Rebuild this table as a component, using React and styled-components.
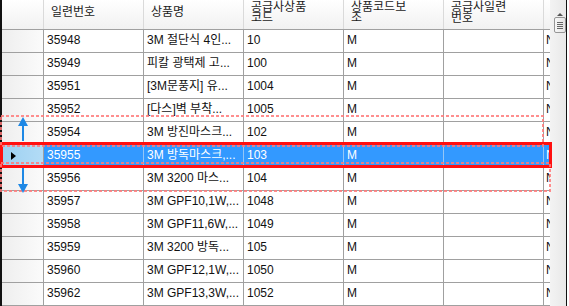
import styled, { createGlobalStyle } from "styled-components";

const GlobalStyle = createGlobalStyle`
  body {
    margin: 0;
    background: #fff;
  }
`;

const Frame = styled.div`
  position: relative;
  width: 569px;
  height: 306px;
  display: flex;
  overflow: hidden;
  font-family: "Liberation Sans", "Noto Sans CJK KR", sans-serif;
  font-size: 12px;
  color: #000;
  background: #fff;
`;

const GridArea = styled.div`
  width: 550px;
  flex: none;
  border-left: 2px solid #111;
  box-sizing: border-box;
  display: flex;
  flex-direction: column;
  overflow: hidden;
`;

const HeaderRow = styled.div`
  display: flex;
  height: 30px;
  flex: none;
  box-sizing: border-box;
  border-bottom: 1px solid #a0a0a0;
  background: linear-gradient(#ffffff, #f1f1f1);
`;

const HeaderCorner = styled.div`
  width: 42px;
  flex: none;
  box-sizing: border-box;
  border-right: 1px solid #dadada;
`;

const HeaderCell = styled.div`
  width: 100px;
  flex: none;
  box-sizing: border-box;
  border-right: 1px solid #dadada;
  padding: 0 0 4px 7px;
  display: flex;
  align-items: center;
  line-height: 11px;
  white-space: pre;
  overflow: hidden;
  color: #1a1a1a;
`;

const HeaderRest = styled.div`
  flex: 1;
`;

const Row = styled.div`
  display: flex;
  height: 23px;
  flex: none;
  box-sizing: border-box;
  border-bottom: 1px solid #a0a0a0;
`;

const RowHeader = styled.div`
  width: 42px;
  flex: none;
  box-sizing: border-box;
  border-right: 1px solid #a0a0a0;
  display: flex;
  align-items: center;
  padding-left: 9px;
  background: ${(p) =>
    p.$selected
      ? "linear-gradient(to right, #9dd0f1, #b3dcf6)"
      : "linear-gradient(to right, #eeeeee, #fbfbfb)"};
`;

const Pointer = styled.span`
  width: 0;
  height: 0;
  border-top: 4px solid transparent;
  border-bottom: 4px solid transparent;
  border-left: 5px solid #000;
`;

const Cell = styled.div`
  width: 100px;
  flex: none;
  box-sizing: border-box;
  border-right: 1px solid ${(p) => (p.$selected ? "#94c6f6" : "#a0a0a0")};
  padding: 0 2px 0 3px;
  line-height: 21px;
  white-space: nowrap;
  overflow: hidden;
  background: ${(p) => (p.$selected ? "#3399ff" : "#fff")};
  color: ${(p) => (p.$selected ? "#fff" : "#111")};
`;

const RestCell = styled(Cell)`
  width: auto;
  flex: 1;
  border-right: none;
  padding: 0 0 0 2px;
`;

const ScrollBar = styled.div`
  width: 16px;
  flex: none;
  background: linear-gradient(to right, #f3f3f3, #e8e8e8);
  display: flex;
  flex-direction: column;
  align-items: center;
  padding-top: 13px;
  padding-left: 3px;
  box-sizing: border-box;
`;

const UpArrow = styled.span`
  width: 0;
  height: 0;
  border-left: 3px solid transparent;
  border-right: 3px solid transparent;
  border-bottom: 3px solid #555;
  margin-bottom: 1px;
`;

const Thumb = styled.div`
  width: 12px;
  height: 16px;
  box-sizing: border-box;
  border: 1px solid #969696;
  border-radius: 2px;
  background: linear-gradient(to right, #f7f7f7, #e4e4e4);
  display: flex;
  flex-direction: column;
  align-items: center;
  justify-content: center;
  gap: 1px;
`;

const Grip = styled.span`
  width: 6px;
  height: 1px;
  background: #666;
`;

const EdgeLine = styled.div`
  width: 1px;
  flex: none;
  background: #111;
  margin-right: 2px;
`;

const Highlight = styled.div`
  position: absolute;
  left: 0;
  top: 142px;
  width: 552px;
  height: 26px;
  box-sizing: border-box;
  border: 3px solid #ff1010;
  pointer-events: none;
`;

const Overlay = styled.svg`
  position: absolute;
  left: 0;
  top: 0;
  pointer-events: none;
`;

const headers = ["일련번호", "상품명", "공급사상품\n코드", "상품코드보\n조", "공급사일련\n번호"];

const rows = [
  ["35948", "3M 절단식 4인...", "10", "M"],
  ["35949", "피칼 광택제 고...", "100", "M"],
  ["35951", "[3M문풍지] 유...", "1004", "M"],
  ["35952", "[다스]벽 부착...", "1005", "M"],
  ["35954", "3M 방진마스크...", "102", "M"],
  ["35955", "3M 방독마스크,...", "103", "M"],
  ["35956", "3M 3200 마스...", "104", "M"],
  ["35957", "3M GPF10,1W,...", "1048", "M"],
  ["35958", "3M GPF11,6W,...", "1049", "M"],
  ["35959", "3M 3200 방독...", "105", "M"],
  ["35960", "3M GPF12,1W,...", "1050", "M"],
  ["35962", "3M GPF13,3W,...", "1052", "M"],
];

const SELECTED = 5;

const App = () => {
  return (
    <>
      <GlobalStyle />
      <Frame>
        <GridArea>
          <HeaderRow>
            <HeaderCorner />
            {headers.map((h, i) => (
              <HeaderCell key={i}>{h}</HeaderCell>
            ))}
            <HeaderRest />
          </HeaderRow>
          {rows.map((r, i) => {
            const sel = i === SELECTED;
            return (
              <Row key={r[0]}>
                <RowHeader $selected={sel}>{sel && <Pointer />}</RowHeader>
                {r.map((v, j) => (
                  <Cell key={j} $selected={sel}>{v}</Cell>
                ))}
                <Cell $selected={sel} />
                <RestCell $selected={sel}>N</RestCell>
              </Row>
            );
          })}
        </GridArea>
        <ScrollBar>
          <UpArrow />
          <Thumb>
            {[1, 2, 3, 4].map((e) => (
              <Grip key={e} />
            ))}
          </Thumb>
        </ScrollBar>
        <EdgeLine />

        <Highlight />
        <Overlay width="569" height="306">
          <g fill="none" stroke="#ff7a7a" strokeOpacity="0.85" strokeWidth="2" strokeDasharray="3 2">
            <rect x="1" y="116" width="542" height="30" />
            <rect x="1" y="163" width="549" height="28" />
          </g>
          <g fill="#1e88e5" stroke="#1e88e5">
            <line x1="23" y1="124" x2="23" y2="141" strokeWidth="2" />
            <polygon points="18,126 23,117 28,126" stroke="none" />
            <line x1="23" y1="168" x2="23" y2="185" strokeWidth="2" />
            <polygon points="18,184 23,193 28,184" stroke="none" />
          </g>
        </Overlay>
      </Frame>
    </>
  );
};

export default App;
